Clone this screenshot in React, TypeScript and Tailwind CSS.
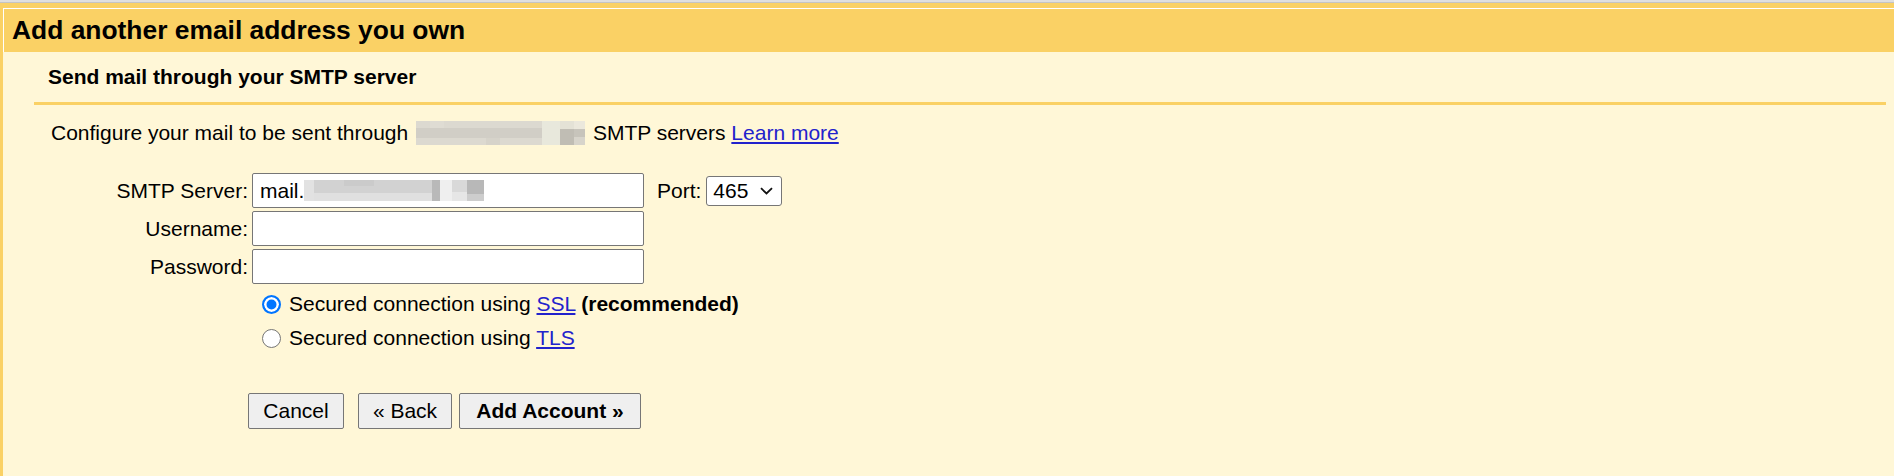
import React from "react";

const FONT = { fontFamily: '"Liberation Sans", Arial, sans-serif' };

function DomainBlur() {
  // pixelated placeholder for the hidden domain name in the intro line
  return (
    <svg width="169" height="24" viewBox="0 0 169 24" className="inline-block align-top mx-[2px]">
      <rect x="0" y="0" width="169" height="24" fill="#dcd9d0" />
      <rect x="0" y="7" width="126" height="10" fill="#d1cec6" />
      <rect x="14" y="0" width="14" height="7" fill="#dfdcd3" />
      <rect x="70" y="17" width="14" height="7" fill="#d6d3ca" />
      <rect x="126" y="0" width="18" height="24" fill="#e8e8dc" />
      <rect x="144" y="0" width="14" height="8" fill="#e4e2d6" />
      <rect x="144" y="8" width="14" height="16" fill="#c0bdb4" />
      <rect x="158" y="0" width="11" height="8" fill="#ebe8dc" />
      <rect x="158" y="8" width="11" height="8" fill="#c7c4bb" />
      <rect x="158" y="16" width="11" height="8" fill="#d7d4cb" />
    </svg>
  );
}

function HostBlur() {
  // pixelated placeholder for the hidden host inside the server field
  return (
    <svg width="180" height="21" viewBox="0 0 180 21" className="block">
      <rect x="0" y="0" width="180" height="21" fill="#d2d2d2" />
      <rect x="0" y="0" width="10" height="21" fill="#e2e2e2" />
      <rect x="10" y="13" width="118" height="8" fill="#e0e0e0" />
      <rect x="40" y="0" width="30" height="6" fill="#cbcbcb" />
      <rect x="128" y="0" width="8" height="21" fill="#b9b9b9" />
      <rect x="136" y="0" width="12" height="21" fill="#efefef" />
      <rect x="148" y="0" width="15" height="12" fill="#d9d9d9" />
      <rect x="148" y="12" width="15" height="9" fill="#e6e6e6" />
      <rect x="163" y="0" width="17" height="21" fill="#b8b8b8" />
      <rect x="163" y="14" width="17" height="7" fill="#cdcdcd" />
    </svg>
  );
}

function TextField({ children }: { children?: React.ReactNode }) {
  return (
    <div className="h-[35px] w-[392px] bg-white border border-[#767676] rounded-[2px] flex items-center pl-[7px] overflow-hidden">
      {children}
    </div>
  );
}

function Radio({ checked }: { checked?: boolean }) {
  return (
    <input
      type="radio"
      name="sec"
      defaultChecked={checked}
      className="appearance-none m-0 w-[19px] h-[19px] shrink-0 rounded-full border border-[#767676] bg-white checked:border-2 checked:border-[#0075ff] checked:bg-[#0075ff] checked:shadow-[inset_0_0_0_2.5px_#fff]"
    />
  );
}

export default function App() {
  return (
    <div className="min-h-screen flex flex-col bg-[#fad165] text-black text-[21px]" style={FONT}>
      <div className="h-[2px] bg-[#dfdfdf]" />
      <div className="h-[1px] bg-[#c4c4c4]" />
      <div className="flex-1 flex flex-col pt-[5px] pl-[3px]">
        <div className="h-[44px] border-t border-l border-white flex items-center pl-[8px]">
          <h1 className="text-[26.4px] font-bold leading-[30px] pb-[2px]">Add another email address you own</h1>
        </div>

        <div className="flex-1 bg-[#fff7d7] flex flex-col">
          <div className="ml-[31px] mr-[8px] pl-[14px] pt-[13px] pb-[13px] border-b-[3px] border-[#fad165]">
            <h2 className="font-bold leading-[24px]">Send mail through your SMTP server</h2>
          </div>

          <p className="mt-[16px] ml-[48px] leading-[24px] whitespace-nowrap">
            Configure your mail to be sent through <DomainBlur /> SMTP servers{" "}
            <a href="#" className="text-[#2222cc] underline">Learn more</a>
          </p>

          <div className="mt-[28px] grid grid-cols-[245px_392px_auto] gap-x-[4px] gap-y-[3px] items-center">
            <label className="text-right leading-[24px]">SMTP Server:</label>
            <TextField>
              <span className="leading-[24px]">mail.</span>
              <HostBlur />
            </TextField>
            <div className="flex items-center ml-[9px]">
              <span className="leading-[24px]">Port:</span>
              <div className="ml-[5px] h-[30px] w-[76px] bg-white border border-[#767676] rounded-[3px] flex items-center pl-[6px] pr-[8px] justify-between">
                <span className="leading-[24px]">465</span>
                <svg width="13" height="8" viewBox="0 0 13 8" fill="none">
                  <path d="M1 1.2 L6.5 6.5 L12 1.2" stroke="#111" strokeWidth="1.8" />
                </svg>
              </div>
            </div>

            <label className="text-right leading-[24px]">Username:</label>
            <TextField />
            <div />

            <label className="text-right leading-[24px]">Password:</label>
            <TextField />
            <div />
          </div>

          <div className="mt-[3px] ml-[259px] flex flex-col">
            <label className="h-[34px] flex items-center whitespace-nowrap">
              <Radio checked />
              <span className="ml-[8px] leading-[24px]">
                Secured connection using <a href="#" className="text-[#2222cc] underline">SSL</a>{" "}
                <b>(recommended)</b>
              </span>
            </label>
            <label className="h-[34px] flex items-center whitespace-nowrap">
              <Radio />
              <span className="ml-[8px] leading-[24px]">
                Secured connection using <a href="#" className="text-[#2222cc] underline">TLS</a>
              </span>
            </label>
          </div>

          <div className="mt-[38px] ml-[245px] flex items-center">
            <button className="h-[36px] w-[96px] bg-[#efefef] border border-[#767676] rounded-[2px] leading-[24px]">
              Cancel
            </button>
            <button className="ml-[14px] h-[36px] w-[94px] bg-[#efefef] border border-[#767676] rounded-[2px] leading-[24px]">
              « Back
            </button>
            <button className="ml-[7px] h-[36px] w-[182px] bg-[#efefef] border border-[#767676] rounded-[2px] font-bold leading-[24px]">
              Add Account »
            </button>
          </div>
        </div>
      </div>
    </div>
  );
}
